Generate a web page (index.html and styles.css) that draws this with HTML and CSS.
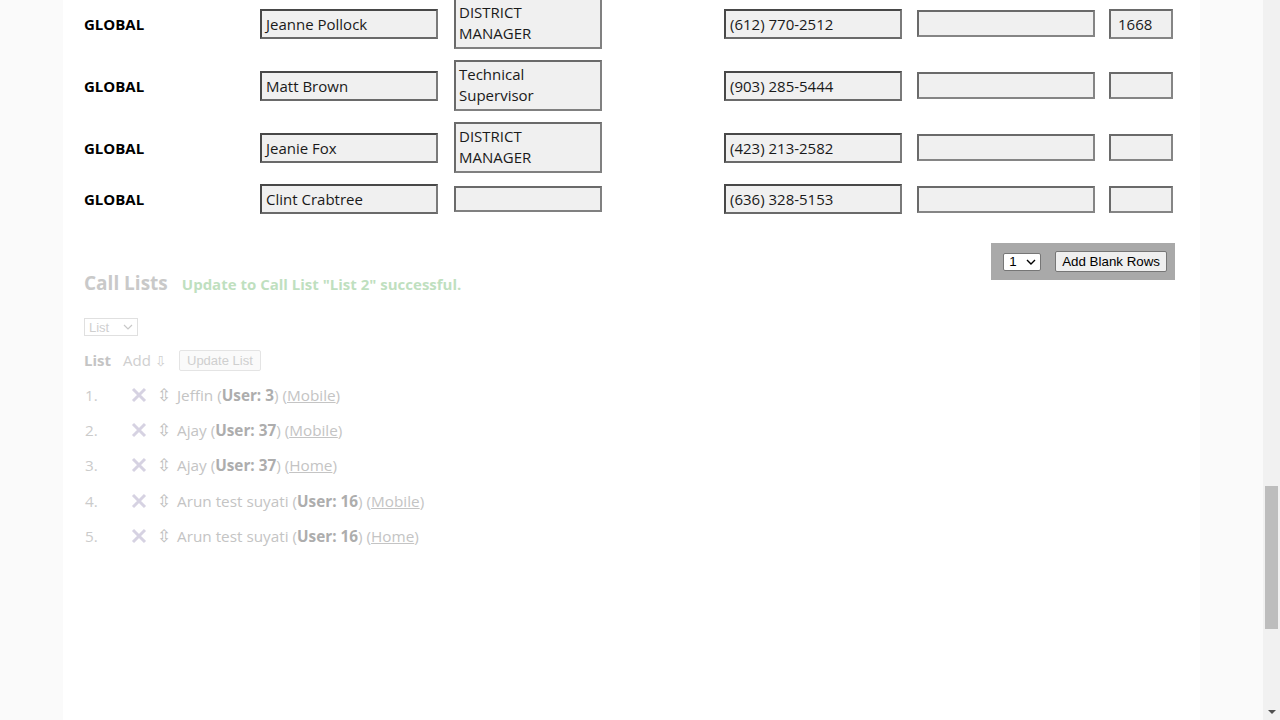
FILE: index.html
```html
<!DOCTYPE html>
<html>
<head>
<meta charset="utf-8">
<link rel="stylesheet" href="styles.css">
</head>
<body>
<div class="viewport">
  <div class="page">
    <div class="contacts">
      <div class="cell scope">GLOBAL</div>
      <div class="cell"><div class="field name">Jeanne Pollock</div></div>
      <div class="cell"><div class="field title">DISTRICT MANAGER</div></div>
      <div class="cell"><div class="field phone">(612) 770-2512</div></div>
      <div class="cell"><div class="field blank"></div></div>
      <div class="cell"><div class="field ext filled">1668</div></div>

      <div class="cell scope">GLOBAL</div>
      <div class="cell"><div class="field name">Matt Brown</div></div>
      <div class="cell"><div class="field title">Technical Supervisor</div></div>
      <div class="cell"><div class="field phone">(903) 285-5444</div></div>
      <div class="cell"><div class="field blank"></div></div>
      <div class="cell"><div class="field ext"></div></div>

      <div class="cell scope">GLOBAL</div>
      <div class="cell"><div class="field name">Jeanie Fox</div></div>
      <div class="cell"><div class="field title">DISTRICT MANAGER</div></div>
      <div class="cell"><div class="field phone">(423) 213-2582</div></div>
      <div class="cell"><div class="field blank"></div></div>
      <div class="cell"><div class="field ext"></div></div>

      <div class="cell scope">GLOBAL</div>
      <div class="cell"><div class="field name">Clint Crabtree</div></div>
      <div class="cell"><div class="field title"></div></div>
      <div class="cell"><div class="field phone">(636) 328-5153</div></div>
      <div class="cell"><div class="field blank"></div></div>
      <div class="cell"><div class="field ext"></div></div>
    </div>

    <div class="toolbar">
      <div class="heading-line">
        <h3 class="section-title">Call Lists</h3>
        <span class="success">Update to Call List "List 2" successful.</span>
      </div>
      <div class="add-rows">
        <span class="mini-select">1 <svg class="chev" width="10" height="6" viewBox="0 0 10 6"><path d="M1 1l4 4 4-4" fill="none" stroke="#000" stroke-width="1.4"/></svg></span>
        <span class="mini-button">Add Blank Rows</span>
      </div>
    </div>

    <div class="faded">
      <div class="list-select">List <svg class="chev" width="10" height="6" viewBox="0 0 10 6"><path d="M1 1l4 4 4-4" fill="none" stroke="#c8c8c8" stroke-width="1.2"/></svg></div>
      <div class="list-bar">
        <span class="list-label">List</span>
        <span class="add-label">Add <span class="arrow-glyph">⇩</span></span>
        <span class="update-btn">Update List</span>
      </div>
      <ol class="call-list">
        <li class="item"><span class="num">1.</span><svg class="xicon" width="16" height="16" viewBox="0 0 16 16"><path d="M2 2l12 12M14 2L2 14" stroke="#d6d2e2" stroke-width="3"/></svg><span class="updown">⇳</span><span class="who">Jeffin (<b>User: 3</b>) (<u>Mobile</u>)</span></li>
        <li class="item"><span class="num">2.</span><svg class="xicon" width="16" height="16" viewBox="0 0 16 16"><path d="M2 2l12 12M14 2L2 14" stroke="#d6d2e2" stroke-width="3"/></svg><span class="updown">⇳</span><span class="who">Ajay (<b>User: 37</b>) (<u>Mobile</u>)</span></li>
        <li class="item"><span class="num">3.</span><svg class="xicon" width="16" height="16" viewBox="0 0 16 16"><path d="M2 2l12 12M14 2L2 14" stroke="#d6d2e2" stroke-width="3"/></svg><span class="updown">⇳</span><span class="who">Ajay (<b>User: 37</b>) (<u>Home</u>)</span></li>
        <li class="item"><span class="num">4.</span><svg class="xicon" width="16" height="16" viewBox="0 0 16 16"><path d="M2 2l12 12M14 2L2 14" stroke="#d6d2e2" stroke-width="3"/></svg><span class="updown">⇳</span><span class="who">Arun test suyati (<b>User: 16</b>) (<u>Mobile</u>)</span></li>
        <li class="item"><span class="num">5.</span><svg class="xicon" width="16" height="16" viewBox="0 0 16 16"><path d="M2 2l12 12M14 2L2 14" stroke="#d6d2e2" stroke-width="3"/></svg><span class="updown">⇳</span><span class="who">Arun test suyati (<b>User: 16</b>) (<u>Home</u>)</span></li>
      </ol>
    </div>
  </div>
</div>
<div class="scrollbar">
  <div class="track"><div class="thumb"></div></div>
  <div class="down"></div>
</div>
</body>
</html>
```
FILE: styles.css
```css
html, body {
  margin: 0;
  height: 720px;
  overflow: hidden;
}
body {
  display: flex;
  background: #fafafa;
  font-family: "Open Sans", "Noto Sans", sans-serif;
  font-size: 15px;
  color: #111;
}
.viewport {
  flex: 1;
  display: flex;
  justify-content: center;
  background: #fafafa;
}
.page {
  width: 1137px;
  height: 720px;
  background: #fff;
  box-sizing: border-box;
  padding-left: 21px;
}
.contacts {
  display: grid;
  grid-template-columns: 176px 194px 270px 193px 192px 64px;
  row-gap: 11px;
  align-items: center;
  margin-top: -2px;
}
.scope {
  font-weight: 700;
  font-size: 15px;
  color: #000;
}
.cell { display: flex; align-items: center; }
.field {
  box-sizing: border-box;
  background: #f0f0f0;
  border: 2px solid;
  border-color: #484848 #7a7a7a #6a6a6a #484848;
  padding: 0 4px;
  line-height: 26px;
  color: #1a1a1a;
  white-space: nowrap;
  overflow: hidden;
}
.name, .phone { width: 178px; height: 30px; }
.title {
  width: 148px;
  min-height: 26px;
  white-space: normal;
  line-height: 21px;
  padding: 2px 4px 3px 3px;
  border-color: #6a6a6a #808080 #808080 #6a6a6a;
}
.blank {
  width: 178px;
  height: 27px;
  border-color: #6a6a6a #858585 #858585 #6a6a6a;
}
.ext {
  width: 65px;
  height: 27px;
  border-color: #6a6a6a #858585 #858585 #6a6a6a;
}
.ext.filled { height: 30px; padding-left: 7px; }

.toolbar {
  display: flex;
  justify-content: space-between;
  align-items: flex-start;
  margin-top: 29px;
  padding-right: 25px;
}
.heading-line {
  display: flex;
  align-items: baseline;
  gap: 14px;
  padding-top: 28px;
}
.section-title {
  margin: 0;
  font-size: 19px;
  font-weight: 700;
  color: #c9c9c9;
  line-height: 24px;
}
.success {
  font-size: 15px;
  font-weight: 700;
  color: #bfe0bf;
}
.add-rows {
  display: flex;
  align-items: center;
  gap: 14px;
  background: #a9a9a9;
  height: 37px;
  padding: 0 8px 0 12px;
  font-family: "Liberation Sans", Arial, sans-serif;
  font-size: 13.33px;
  color: #000;
}
.mini-select {
  display: flex;
  align-items: center;
  justify-content: space-between;
  box-sizing: border-box;
  width: 38px;
  height: 18px;
  background: #fff;
  border: 1px solid #767676;
  border-radius: 2px;
  padding: 0 4px 0 5px;
}
.mini-button {
  box-sizing: border-box;
  height: 21px;
  line-height: 19px;
  padding: 0 6px;
  background: #efefef;
  border: 1px solid #767676;
  border-radius: 2px;
}
.faded { color: #c8c8c8; }
.list-select {
  display: flex;
  align-items: center;
  justify-content: space-between;
  box-sizing: border-box;
  width: 54px;
  height: 18px;
  margin-top: 23px;
  border: 1px solid #e0e0e0;
  padding: 0 4px;
  font-family: "Liberation Sans", Arial, sans-serif;
  font-size: 13px;
  color: #cfcfcf;
}
.list-bar {
  display: flex;
  align-items: center;
  margin-top: 13px;
  height: 22px;
}
.list-label { font-weight: 700; color: #c4c4c4; width: 39px; }
.add-label { color: #cfcfcf; width: 56px; font-size: 15px; }
.arrow-glyph { font-family: "DejaVu Sans", sans-serif; font-size: 14px; }
.update-btn {
  box-sizing: border-box;
  height: 21px;
  line-height: 19px;
  padding: 0 7px;
  border: 1px solid #e4e4e4;
  border-radius: 2px;
  background: #fafafa;
  font-family: "Liberation Sans", Arial, sans-serif;
  font-size: 13px;
  color: #cfcfcf;
}
.call-list {
  list-style: none;
  margin: 6px 0 0;
  padding: 0;
}
.item {
  display: flex;
  align-items: center;
  height: 35.3px;
  font-size: 15.3px;
  color: #c4c4c4;
}
.num { width: 47px; padding-left: 1px; box-sizing: border-box; color: #cbcbcb; }
.xicon { margin-right: 10px; }
.updown {
  font-family: "DejaVu Sans", sans-serif;
  font-size: 17px;
  width: 20px;
  color: #bdbdbd;
}
.who b { color: #adadad; font-weight: 700; }
.who u { color: #c4c4c4; }

.scrollbar {
  width: 17px;
  height: 720px;
  background: #f1f1f1;
  display: flex;
  flex-direction: column;
  align-items: center;
}
.track { flex: 1; width: 100%; }
.thumb {
  margin: 486px auto 0;
  width: 13px;
  height: 143px;
  background: #bdbdbd;
}
.down {
  width: 0;
  height: 0;
  border-left: 4px solid transparent;
  border-right: 4px solid transparent;
  border-top: 4px solid #505050;
  margin-bottom: 6px;
}
```
